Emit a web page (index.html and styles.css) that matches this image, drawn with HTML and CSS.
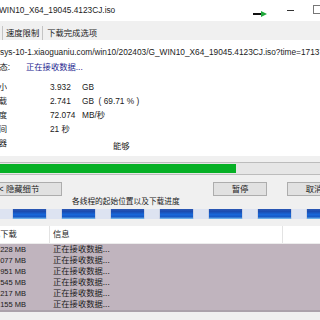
FILE: index.html
```html
<!DOCTYPE html>
<html>
<head>
<meta charset="utf-8">
<link rel="stylesheet" href="styles.css">
</head>
<body>
<div class="titlebar">
  <span class="title">WIN10_X64_19045.4123CJ.iso</span>
  <svg class="arrow" width="14" height="6" viewBox="0 0 14 6"><rect x="0" y="2" width="9" height="2" fill="#111"/><path d="M8 0 L14 3 L8 6 Z" fill="#1fa83a"/></svg>
  <span class="min"></span>
  <span class="max"></span>
</div>
<div class="tabs">
  <span class="tab tab1">速度限制</span>
  <span class="tab tab2">下载完成选项</span>
</div>
<div class="panel">
  <div class="url">sys-10-1.xiaoguaniu.com/win10/202403/G_WIN10_X64_19045.4123CJ.iso?time=1713721</div>
  <div class="status"><span class="lbl lbl-s"><span>状态:</span></span><span class="sval">正在接收数据...</span></div>
  <div class="info first"><span class="lbl"><span>文件大小</span></span><span class="val"><span class="num">3.932</span>GB</span></div>
  <div class="info"><span class="lbl"><span>已下载</span></span><span class="val"><span class="num">2.741</span>GB&nbsp; ( 69.71 % )</span></div>
  <div class="info"><span class="lbl"><span>传输速度</span></span><span class="val"><span class="num">72.074</span>MB/秒</span></div>
  <div class="info"><span class="lbl"><span>剩余时间</span></span><span class="val">21 秒</span></div>
  <div class="info"><span class="lbl"><span>服务器</span></span><span class="yes">能够</span></div>
</div>
<div class="progress"><div class="fill" style="width:236px"></div></div>
<div class="buttons">
  <span class="btn btn-hide">&lt;&lt; 隐藏细节</span>
  <span class="btn btn-pause">暂停</span>
  <span class="btn btn-cancel">取消</span>
</div>
<div class="caption">各线程的起始位置以及下载进度</div>
<div class="segbar">
  <span class="seg"></span><span class="seg"></span><span class="seg"></span><span class="seg"></span><span class="seg"></span><span class="seg"></span><span class="seg"></span>
</div>
<div class="list">
  <div class="lhead"><span class="h1">已下载</span><span class="h2">信息</span><span class="h3"></span></div>
  <div class="lrows">
    <div class="r"><span class="c1"><span>155.228 MB</span></span><span class="c2">正在接收数据...</span></div>
    <div class="r"><span class="c1"><span>154.077 MB</span></span><span class="c2">正在接收数据...</span></div>
    <div class="r"><span class="c1"><span>153.951 MB</span></span><span class="c2">正在接收数据...</span></div>
    <div class="r"><span class="c1"><span>152.545 MB</span></span><span class="c2">正在接收数据...</span></div>
    <div class="r"><span class="c1"><span>151.217 MB</span></span><span class="c2">正在接收数据...</span></div>
    <div class="r"><span class="c1"><span>150.155 MB</span></span><span class="c2">正在接收数据...</span></div>
  </div>
</div>
</body>
</html>
```
FILE: styles.css
```css
html, body { margin: 0; padding: 0; }
body {
  width: 320px;
  height: 320px;
  overflow: hidden;
  background: #f0f0f0;
  font-family: "Liberation Sans", "Noto Sans CJK SC", sans-serif;
  font-size: 8.3px;
  color: #1b1b1b;
}
.titlebar {
  height: 21px;
  background: #fff;
  display: flex;
  align-items: flex-start;
}
.title {
  margin-left: -1px;
  margin-top: 4px;
  line-height: 12px;
  white-space: nowrap;
}
.arrow { margin-left: auto; margin-top: 11px; flex-shrink: 0; }
.min {
  margin-left: 20px;
  margin-top: 10px;
  width: 7px;
  height: 1px;
  background: #333;
  flex-shrink: 0;
}
.max {
  margin-left: 19px;
  margin-right: -2px;
  margin-top: 5px;
  width: 9px;
  height: 9px;
  border: 1px solid #777;
  box-sizing: border-box;
  flex-shrink: 0;
}
.tabs {
  height: 19px;
  display: flex;
  align-items: flex-end;
  padding-left: 2px;
}
.tab {
  height: 14px;
  line-height: 14px;
  white-space: nowrap;
}
.tab1 {
  border-left: 1px solid #c4c4c4;
  border-right: 1px solid #c4c4c4;
  padding: 0 3px;
}
.tab2 { padding-left: 4px; }
.panel {
  background: #fff;
  height: 116px;
  padding-top: 7px;
  box-sizing: border-box;
  white-space: nowrap;
}
.url { line-height: 11px; }
.status { display: flex; margin-top: 4px; line-height: 11px; }
.lbl {
  display: flex;
  justify-content: flex-end;
  overflow: hidden;
  width: 7px;
  flex-shrink: 0;
}
.lbl > span { flex-shrink: 0; }
.lbl-s { width: 10px; }
.sval { margin-left: 16px; color: #24248e; }
.info { display: flex; line-height: 14px; align-items: flex-start; }
.info.first { margin-top: 7px; }
.val { margin-left: 43px; }
.num { display: inline-block; width: 32px; }
.yes { margin-left: 106px; margin-top: 3px; }
.progress {
  margin-top: 6px;
  margin-left: -2px;
  margin-right: -2px;
  height: 13px;
  border: 1px solid #bcbcbc;
  padding: 1px;
  box-sizing: border-box;
  background: #e6e6e6;
}
.fill { height: 9px; background: #06b025; }
.buttons {
  margin-top: 7px;
  display: flex;
  white-space: nowrap;
}
.btn {
  height: 14px;
  box-sizing: border-box;
  border: 1px solid #adadad;
  background: #e1e1e1;
  line-height: 12px;
  text-align: center;
  flex-shrink: 0;
}
.btn-hide { margin-left: -20px; width: 82px; text-align: left; padding-left: 13px; }
.btn-pause { margin-left: 151px; width: 54px; }
.btn-cancel { margin-left: 20px; width: 54px; }
.caption {
  margin-top: 1px;
  padding-left: 72px;
  line-height: 10px;
  font-size: 7.7px;
}
.segbar {
  margin-top: 2px;
  height: 10px;
  display: flex;
  gap: 33px;
  background: linear-gradient(#2c58b4 0%, #1a4cb0 25%, #1766d8 55%, #1659c6 78%, #86c8ef 100%);
}
.seg {
  width: 16px;
  flex-shrink: 0;
  background: #dde3f1;
  box-sizing: border-box;
  border-left: 1px solid #c9d1e4;
  border-right: 1px solid #c9d1e4;
}
.seg:first-child { margin-left: -3px; }
.list { margin-top: 7px; }
.lhead {
  height: 18px;
  background: #fff;
  display: flex;
  line-height: 17px;
  border-bottom: 1px solid #ececec;
  box-sizing: border-box;
  white-space: nowrap;
}
.h1 {
  width: 49px;
  border-right: 1px solid #e3e3e3;
  overflow: hidden;
  flex-shrink: 0;
  text-indent: -8px;
}
.h2 {
  width: 233px;
  padding-left: 3px;
  border-right: 1px solid #e3e3e3;
  box-sizing: border-box;
  flex-shrink: 0;
}
.lrows {
  background: #c0b4be;
  border-bottom: 2px solid #aba2ab;
}
.r { display: flex; height: 11px; line-height: 11px; white-space: nowrap; }
.c1 {
  width: 49px;
  padding-right: 23px;
  box-sizing: border-box;
  display: flex;
  justify-content: flex-end;
  overflow: hidden;
  flex-shrink: 0;
  font-size: 7.5px;
}
.c1 > span { flex-shrink: 0; }
.c2 { padding-left: 4px; }
```
